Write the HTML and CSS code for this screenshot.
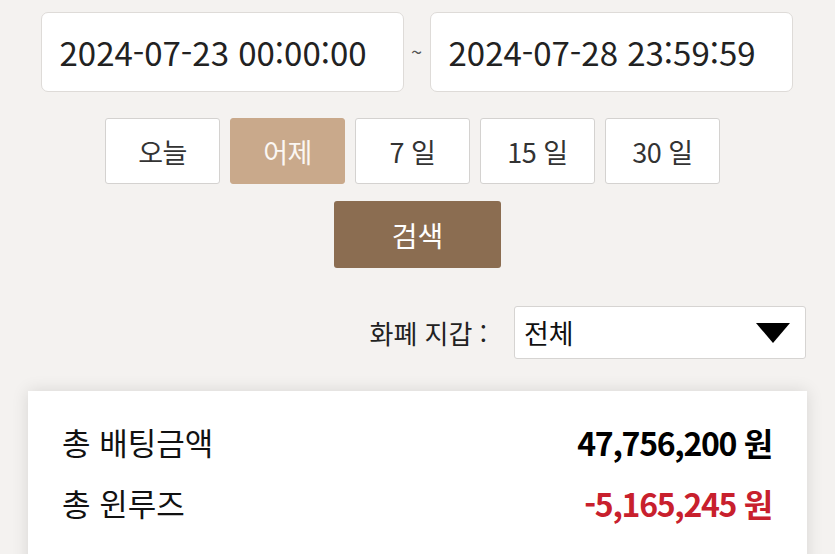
FILE: index.html
```html
<!DOCTYPE html>
<html lang="ko">
<head>
<meta charset="utf-8">
<link rel="stylesheet" href="styles.css">
</head>
<body>
<div class="page">
  <div class="date-row">
    <div class="date-input">2024-07-23 00:00:00</div>
    <span class="tilde">~</span>
    <div class="date-input">2024-07-28 23:59:59</div>
  </div>
  <div class="period-row">
    <button class="period">오늘</button>
    <button class="period active">어제</button>
    <button class="period">7 일</button>
    <button class="period">15 일</button>
    <button class="period">30 일</button>
  </div>
  <div class="search-row">
    <button class="search">검색</button>
  </div>
  <div class="wallet-row">
    <span class="wallet-label">화폐 지갑 :</span>
    <div class="select">
      <span>전체</span>
      <svg class="caret" width="34" height="20" viewBox="0 0 34 20"><polygon points="0,0 34,0 17,20" fill="#000"/></svg>
    </div>
  </div>
  <div class="card">
    <div class="sum-row">
      <span class="sum-label">총 배팅금액</span>
      <span class="sum-value">47,756,200 원</span>
    </div>
    <div class="sum-row">
      <span class="sum-label">총 윈루즈</span>
      <span class="sum-value neg">-5,165,245 원</span>
    </div>
  </div>
</div>
</body>
</html>
```

FILE: styles.css
```css
html, body {
  margin: 0;
  padding: 0;
  background: #f4f2f0;
  font-family: "Noto Sans CJK KR", "Noto Sans", sans-serif;
  overflow: hidden;
}
.page {
  width: 835px;
  height: 554px;
  overflow: hidden;
}
.date-row {
  display: flex;
  justify-content: center;
  align-items: center;
  padding-top: 12px;
  padding-right: 2px;
}
.date-input {
  box-sizing: border-box;
  width: 363px;
  height: 80px;
  background: #fff;
  border: 1px solid #dedbd8;
  border-radius: 7px;
  padding-left: 18px;
  display: flex;
  align-items: center;
  font-size: 33px;
  letter-spacing: 0;
  color: #222;
}
.tilde {
  width: 26px;
  text-align: center;
  font-size: 20px;
  color: #555;
  line-height: 1;
  margin-top: 0;
}
.period-row {
  display: flex;
  justify-content: center;
  gap: 10px;
  margin-top: 26px;
  padding-right: 10px;
}
.period {
  box-sizing: border-box;
  width: 115px;
  height: 66px;
  background: #fff;
  border: 1px solid #d4d2d0;
  border-radius: 3px;
  font-family: inherit;
  font-size: 27px;
  letter-spacing: -0.5px;
  color: #333;
  padding: 0;
}
.period.active {
  background: #c9a98b;
  border-color: #c9a98b;
  color: #fbf7f3;
}
.search-row {
  display: flex;
  justify-content: center;
  margin-top: 17px;
}
.search {
  width: 167px;
  height: 67px;
  background: #8b6d51;
  border: none;
  border-radius: 3px;
  color: #fff;
  font-family: inherit;
  font-size: 28px;
  padding: 0;
}
.wallet-row {
  display: flex;
  justify-content: flex-end;
  align-items: center;
  margin-top: 38px;
  padding-right: 29px;
  gap: 27px;
}
.wallet-label {
  font-size: 26px;
  color: #222;
}
.select {
  box-sizing: border-box;
  width: 292px;
  height: 53px;
  background: #fff;
  border: 1px solid #d6d4d2;
  border-radius: 3px;
  display: flex;
  align-items: center;
  justify-content: space-between;
  padding: 0 15px 0 9px;
  font-size: 27px;
  color: #111;
}
.caret {
  display: block;
}
.card {
  margin: 32px 28px 0 28px;
  width: 779px;
  height: 200px;
  background: #fff;
  box-shadow: 0 0 16px rgba(0,0,0,0.12);
  padding: 20px 35px 0 34px;
  box-sizing: border-box;
}
.sum-row {
  display: flex;
  justify-content: space-between;
  align-items: center;
  height: 61px;
}
.sum-label {
  font-size: 31px;
  color: #111;
}
.sum-value {
  font-size: 32px;
  font-weight: 700;
  color: #000;
  letter-spacing: -1.3px;
}
.sum-value.neg {
  color: #c8202d;
}
```
